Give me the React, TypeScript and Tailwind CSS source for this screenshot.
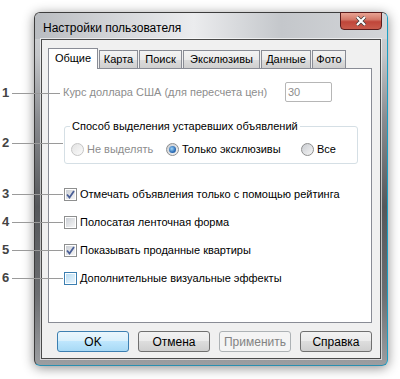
import React from 'react';

const font = { fontFamily: '"Liberation Sans", Arial, sans-serif' };

const tabs = [
  { t: 'Общие', w: 'w-[50px]' },
  { t: 'Карта', w: 'w-[39px]' },
  { t: 'Поиск', w: 'w-[43px]' },
  { t: 'Эксклюзивы', w: 'w-[77px]' },
  { t: 'Данные', w: 'w-[50px]' },
  { t: 'Фото', w: 'w-[34px]' },
];

const Check = ({ checked, hover }: { checked?: boolean; hover?: boolean }) => (
  <span
    className={`w-[13px] h-[13px] border flex items-center justify-center shrink-0 ${
      hover ? 'border-[#3c7fb1]' : 'border-[#8e8f8f]'
    } bg-white`}
  >
    <span
      className={`w-[9px] h-[9px] flex items-center justify-center ${
        hover
          ? 'bg-[linear-gradient(135deg,#b9dcf3,#eaf6fd)]'
          : 'bg-[linear-gradient(135deg,#cbcfd5,#f6f6f6)]'
      }`}
    >
      {checked && (
        <svg width="9" height="9" viewBox="0 0 9 9">
          <path d="M1 4.5 L3.5 7.5 L8 1" fill="none" stroke="#4a5f97" strokeWidth="1.8" />
        </svg>
      )}
    </span>
  </span>
);

const Radio = ({ checked, disabled }: { checked?: boolean; disabled?: boolean }) => (
  <span
    className={`w-[13px] h-[13px] rounded-full border flex items-center justify-center shrink-0 ${
      disabled
        ? 'border-[#c5c5c5] bg-[linear-gradient(135deg,#e2e2e2,#fbfbfb)]'
        : 'border-[#8e8f8f] bg-[linear-gradient(135deg,#c9ccd1,#f5f5f5)]'
    }`}
  >
    {checked && (
      <span className="w-[7px] h-[7px] rounded-full bg-[radial-gradient(circle_at_40%_40%,#9fd6f8,#2a6bb5_60%,#1b4f8f)]" />
    )}
  </span>
);

const Button = ({ label, primary, disabled }: { label: string; primary?: boolean; disabled?: boolean }) => (
  <button
    className={`w-[72px] h-[21px] rounded-[3px] border text-[12px] leading-none ${
      primary
        ? 'border-[#3c7fb1] bg-[linear-gradient(180deg,#eaf6fd_0%,#d9f0fc_45%,#bee6fd_50%,#a7d9f5_100%)] text-black'
        : disabled
        ? 'border-[#adb2b5] bg-[#f4f4f4] text-[#838383]'
        : 'border-[#707070] bg-[linear-gradient(180deg,#f2f2f2_0%,#ebebeb_45%,#dddddd_50%,#cfcfcf_100%)] text-black'
    }`}
  >
    {label}
  </button>
);

const Callout = ({ n, y, to }: { n: number; y: number; to: number }) => (
  <div className="absolute left-0 flex items-center" style={{ top: y - 8 }}>
    <span className="w-[12px] text-[13px] font-semibold text-[#444] leading-[16px] pl-[2px]">{n}</span>
    <span className="h-px bg-[#9a9a9a]" style={{ width: to - 12 }} />
  </div>
);

export default function App() {
  return (
    <div className="relative w-[400px] h-[379px] bg-white overflow-hidden" style={font}>
      <div className="pt-[12px] pl-[34px]">
        <div className="w-[354px] h-[354px] rounded-[6px] border border-[#3d3d3d] border-r-[#1a9fc4] border-b-[#2a8fb0] shadow-[0_2px_12px_rgba(0,0,0,0.45)] bg-[linear-gradient(180deg,#d3d5d8_0%,#c4c6c9_12%,#8a8c90_30%,#55575a_55%,#6c6e71_80%,#9c9ea1_100%)] flex flex-col">
          <div className="h-[26px] rounded-t-[5px] flex items-start justify-between pl-[8px] pr-[5px] shrink-0 bg-[linear-gradient(90deg,#b9bcc0_0%,#d6d8db_25%,#ebecee_45%,#c4c7cb_70%,#d3d5d8_100%)]">
            <span className="text-[12px] text-black mt-[6px] whitespace-nowrap">Настройки пользователя</span>
            <div className="w-[42px] h-[18px] mt-[-1px] rounded-b-[4px] border border-[#5b1c1c] bg-[linear-gradient(180deg,#e8a393_0%,#d47a6a_40%,#c0463a_55%,#c95b4c_100%)] flex items-center justify-center">
              <svg width="12" height="10" viewBox="0 0 12 10">
                <path d="M2 1 L10 9 M10 1 L2 9" stroke="#333" strokeWidth="3.4" />
                <path d="M2 1 L10 9 M10 1 L2 9" stroke="#fff" strokeWidth="2.2" />
              </svg>
            </div>
          </div>
          <div className="flex-1 mx-[6px] mb-[6px] border border-[#4a4a4a] shadow-[0_0_0_1px_rgba(255,255,255,0.6)] bg-[#f0f0f0] flex flex-col pl-[6px] pr-[8px] pt-[7px]">
            <div className="flex items-end h-[21px]">
              {tabs.map((tab, i) =>
                i === 0 ? (
                  <div
                    key={tab.t}
                    className={`${tab.w} h-[21px] border border-b-0 border-[#898c95] bg-white text-[11px] flex items-center justify-center relative z-10 mb-[-1px] pb-[1px]`}
                  >
                    {tab.t}
                  </div>
                ) : (
                  <div
                    key={tab.t}
                    className={`${tab.w} h-[18px] ml-[1px] border border-b-0 border-[#898c95] bg-[linear-gradient(180deg,#f3f3f3_0%,#ebebeb_50%,#dddddd_51%,#cfcfcf_100%)] text-[11px] flex items-center justify-center whitespace-nowrap`}
                  >
                    {tab.t}
                  </div>
                )
              )}
            </div>
            <div className="h-[255px] border border-[#898c95] bg-white pt-[13px] pl-[14px] pr-[39px]">
              <div className="flex items-center justify-between h-[20px]">
                <span className="text-[11px] text-[#8d8d8d] whitespace-nowrap">Курс доллара США (для пересчета цен)</span>
                <div className="w-[47px] h-[20px] border border-[#b6b6b6] rounded-[2px] text-[11px] text-[#8d8d8d] flex items-center pl-[2px]">
                  30
                </div>
              </div>
              <div className="mt-[24px] ml-[1px] w-[294px] h-[38px] border border-[#d5dfe5] rounded-[3px] relative">
                <span className="absolute top-[-8px] left-[5px] bg-white px-[2px] text-[11px] leading-[15px] whitespace-nowrap">
                  Способ выделения устаревших объявлений
                </span>
                <div className="flex items-center h-full pt-[8px] pl-[6px] text-[11px] whitespace-nowrap">
                  <Radio disabled />
                  <span className="ml-[3px] text-[#8d8d8d] w-[79px]">Не выделять</span>
                  <Radio checked />
                  <span className="ml-[3px] w-[119px]">Только эксклюзивы</span>
                  <Radio />
                  <span className="ml-[3px]">Все</span>
                </div>
              </div>
              <div className="mt-[24px] ml-[1px] flex flex-col gap-[15px] text-[11px] whitespace-nowrap">
                <label className="flex items-center gap-[3px] h-[13px]">
                  <Check checked />
                  <span>Отмечать объявления только с помощью рейтинга</span>
                </label>
                <label className="flex items-center gap-[3px] h-[13px]">
                  <Check />
                  <span>Полосатая ленточная форма</span>
                </label>
                <label className="flex items-center gap-[3px] h-[13px]">
                  <Check checked />
                  <span>Показывать проданные квартиры</span>
                </label>
                <label className="flex items-center gap-[3px] h-[13px]">
                  <Check hover />
                  <span>Дополнительные визуальные эффекты</span>
                </label>
              </div>
            </div>
            <div className="flex gap-[9px] pl-[9px] mt-[8px]">
              <Button label="OK" primary />
              <Button label="Отмена" />
              <Button label="Применить" disabled />
              <Button label="Справка" />
            </div>
          </div>
        </div>
      </div>
      <Callout n={1} y={93} to={60} />
      <Callout n={2} y={143} to={63} />
      <Callout n={3} y={194} to={63} />
      <Callout n={4} y={222} to={63} />
      <Callout n={5} y={250} to={63} />
      <Callout n={6} y={278} to={63} />
    </div>
  );
}
